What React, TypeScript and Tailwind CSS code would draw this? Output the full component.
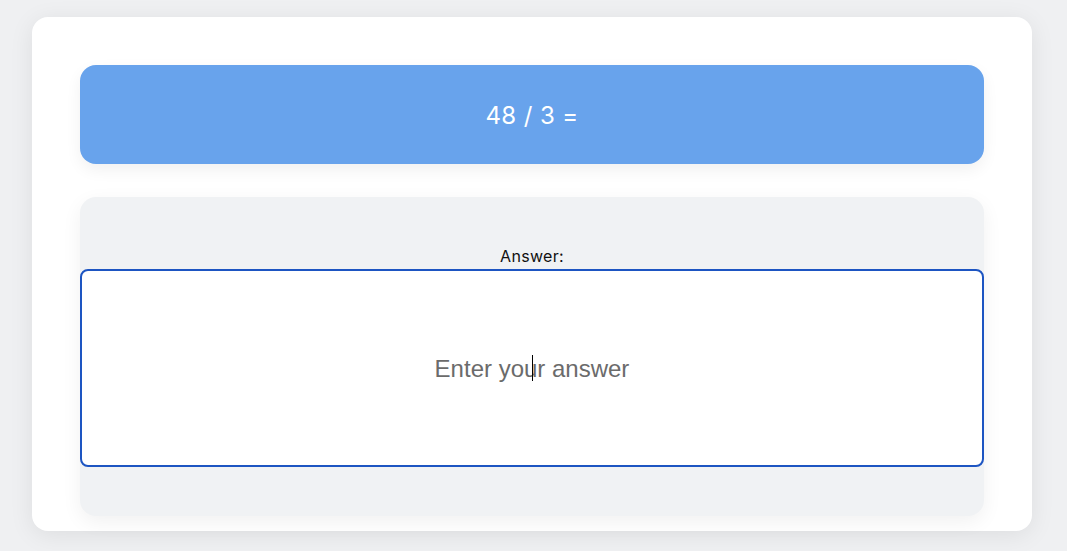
import React from "react";

export default function App() {
  return (
    <div className="min-h-[551px] w-full bg-[#eff0f2] pt-[17px] pb-[20px]" style={{ fontFamily: "Inter, 'DejaVu Sans', sans-serif" }}>
      <div className="ml-[32px] w-[1000px] rounded-[16px] bg-white px-[48px] pt-[48px] pb-[15px] shadow-[0_4px_24px_rgba(0,0,0,0.08)]">
        <div className="flex h-[99px] items-center justify-center rounded-[16px] bg-[#68a3ec] shadow-[0_6px_16px_rgba(0,0,0,0.06)]">
          <span className="pt-[2px] text-[24px] font-normal tracking-[0.4px] text-white">48 / 3 =</span>
        </div>
        <div className="mt-[33px] flex flex-col items-center rounded-[16px] bg-[#f0f2f4] pt-[50px] pb-[49px] shadow-[0_6px_20px_rgba(0,0,0,0.06)]">
          <label className="mb-[3px] text-[16px] leading-[19px] tracking-[0.3px] text-[#111]">Answer:</label>
          <div className="relative w-full">
            <input
              placeholder="Enter your answer"
              className="block h-[198px] w-full rounded-[8px] border-2 border-[#1d55c2] bg-white pt-[2px] text-center text-[24px] text-[#333] outline-none placeholder:text-[#6b6b6b]"
              style={{ fontFamily: "'Liberation Sans', Arial, sans-serif" }}
            />
            <span className="pointer-events-none absolute left-[452px] top-[86px] h-[26px] w-px bg-black" />
          </div>
        </div>
      </div>
    </div>
  );
}
